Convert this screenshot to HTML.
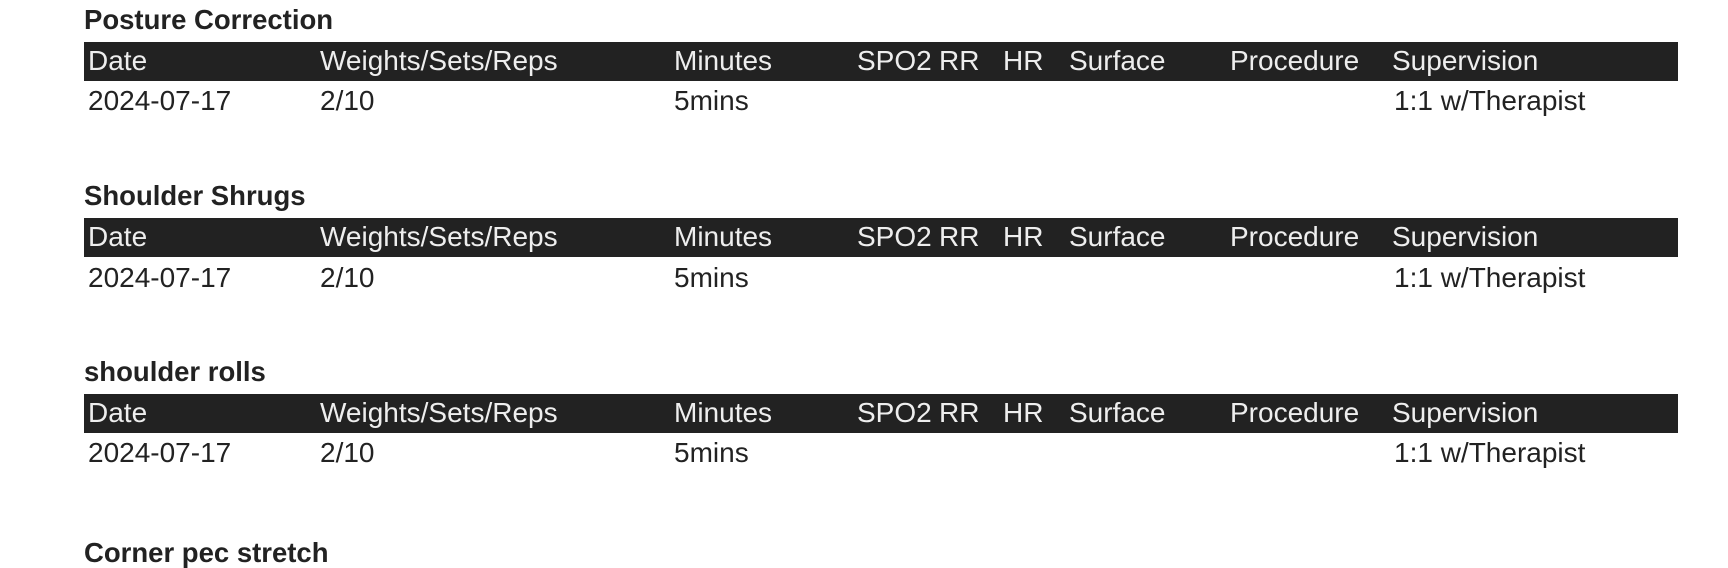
<!DOCTYPE html>
<html><head><meta charset="utf-8"><style>
body{margin:0;width:1728px;height:552px;overflow:hidden;background:#fff;font-family:"Liberation Sans",Arial,sans-serif;position:relative}
.t{position:absolute;left:84px;font-weight:bold;font-size:27.5px;color:#222;line-height:30px;white-space:nowrap}
.bar{position:absolute;left:84px;width:1594px;height:39px;background:#222}
.c{position:absolute;font-size:28px;line-height:30px;white-space:nowrap}
.h{color:#eee}
.d{color:#222}
</style></head><body>
<div class="t" style="top:5px">Posture Correction</div>
<div class="bar" style="top:42px"></div>
<div class="t" style="top:181px">Shoulder Shrugs</div>
<div class="bar" style="top:218px"></div>
<div class="t" style="top:357px">shoulder rolls</div>
<div class="bar" style="top:394px"></div>
<div class="t" style="top:538px">Corner pec stretch</div>
<div id="rows"></div>
<script>
var H=[["Date",88],["Weights/Sets/Reps",320],["Minutes",674],["SPO2",857],["RR",939],["HR",1003],["Surface",1069],["Procedure",1230],["Supervision",1392]];
var D=[["2024-07-17",88],["2/10",320],["5mins",674],["1:1 w/Therapist",1394]];
var s="";
[[46,86],[222,263],[398,438]].forEach(function(y){
H.forEach(function(h){s+='<div class="c h" style="left:'+h[1]+'px;top:'+y[0]+'px">'+h[0]+'</div>';});
D.forEach(function(h){s+='<div class="c d" style="left:'+h[1]+'px;top:'+y[1]+'px">'+h[0]+'</div>';});
});
document.getElementById("rows").innerHTML=s;
</script>
</body></html>
